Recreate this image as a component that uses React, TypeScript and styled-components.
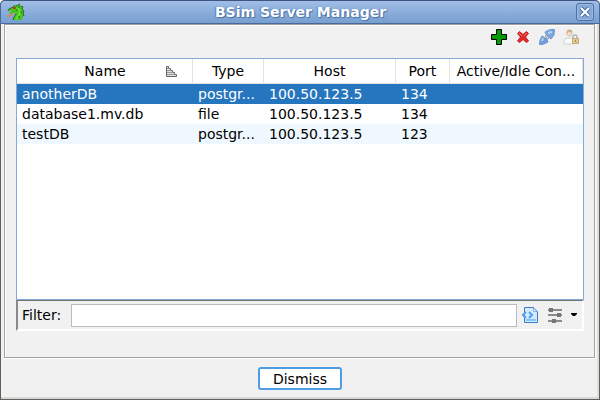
import React from "react";
import styled, { createGlobalStyle, css } from "styled-components";

const GlobalStyle = createGlobalStyle`
  * { box-sizing: border-box; }
  body { margin: 0; }
  body, button, input { font: 14px/20px "DejaVu Sans", sans-serif; color: #000; }
`;

const Window = styled.div`
  min-height: 100vh;
  display: flex;
  flex-direction: column;
  background: #f1f1f1;
  border: 1px solid #5f5f5d;
  border-top: 0;
  border-radius: 5px 5px 0 0;
  box-shadow: inset 0 -2px #d8d8d4, inset -2px 0 #dededb, inset 2px 0 #f3f0ee;
`;

const TitleBar = styled.header`
  height: 24px;
  margin: 0 -1px;
  padding: 0 5px 0 6px;
  display: grid;
  grid-template-columns: 18px 1fr 18px;
  align-items: center;
  background: linear-gradient(#a0bde6, #769fd0);
  border: 1px solid #4a6a9b;
  border-top-color: #3f5680;
  border-radius: 5px 5px 0 0;
`;

const Title = styled.h1`
  margin: 0;
  text-align: center;
  font: bold 14px/20px "DejaVu Sans", sans-serif;
  color: #fff;
  text-shadow: 1px 1px 1px #4a6fa5, -1px 0 1px #5b83ba;
`;

const CloseButton = styled.button`
  width: 18px;
  height: 18px;
  padding: 0;
  display: grid;
  place-items: center;
  background: #86a9d8;
  border: 1px solid #4d70a5;
  border-radius: 3px;
  box-shadow: inset 0 0 0 1px #9bbae3;
`;

const Panel = styled.main`
  flex: 1;
  display: flex;
  flex-direction: column;
  margin: 0 4px 0 3px;
  padding: 0 10px 26px 11px;
  border: 1px solid #a2a2a2;
  box-shadow: inset 1px 1px #fff, 0 1px #fff, 1px 0 #fff;
`;

const Toolbar = styled.div`
  height: 33px;
  padding: 3px 4px 0 0;
  display: flex;
  justify-content: flex-end;
  gap: 6px;
`;

const IconButton = styled.button`
  width: 18px;
  height: 18px;
  padding: 0;
  border: 0;
  background: none;
  svg { display: block; }
`;

const TableArea = styled.div`
  flex: 1;
  background: #fff;
  border: 1px solid #86a9d5;
`;

const ServerTable = styled.table`
  width: 100%;
  table-layout: fixed;
  border-collapse: separate;
  border-spacing: 0;
`;

const Column = styled.col<{ $width?: string }>`
  width: ${(p) => p.$width ?? "auto"};
`;

const HeaderCell = styled.th`
  height: 25px;
  padding: 0 4px;
  font-weight: normal;
  white-space: nowrap;
  border-right: 1px solid #e2e2e2;
  border-bottom: 1px solid #e2e2e2;
`;

const SortedHeader = styled.div`
  display: flex;
  align-items: center;
  span { flex: 1; padding-left: 24px; }
  svg { margin-right: 10px; }
`;

const Row = styled.tr<{ $selected?: boolean }>`
  &:nth-child(odd) { background: #f0f8ff; }
  ${(p) => p.$selected && css`
    &:nth-child(odd) { background: #2675bf; }
    color: #fff;
  `}
`;

const Cell = styled.td`
  height: 20px;
  padding: 0 5px;
  white-space: nowrap;
`;

const FilterBar = styled.div`
  height: 31px;
  padding: 0 4px;
  display: flex;
  align-items: center;
  border: 2px solid #fff;
  border-top: 1px solid #737373;
  border-left: 2px solid #8a8a8a;
`;

const FilterLabel = styled.label`
  width: 49px;
`;

const FilterInput = styled.input`
  flex: 1;
  min-width: 0;
  height: 23px;
  padding: 0 4px;
  margin-right: 4px;
  border: 1px solid #bcbcbc;
  background: #fff;
  outline: 0;
`;

const OptionsButton = styled(IconButton)`
  width: 32px;
  margin-left: 7px;
`;

const Footer = styled.footer`
  height: 41px;
  display: flex;
  justify-content: center;
  align-items: center;
`;

const DismissButton = styled.button`
  width: 84px;
  height: 23px;
  padding: 0;
  line-height: 18px;
  background: #fff;
  border: 2px solid #4e9de6;
  border-radius: 3px;
`;

const Dragon = () => (
  <svg width="18" height="18" viewBox="0 0 18 18" aria-hidden="true">
    <path d="M1 8 2 6 6 4 8 2l2 1 3-2 1 2 2 1-1 2 2 2-1 2 1 3-2 2v2H6l1-3 2-3-2-1-4 1-1-1 3-2z" fill="#46c222" />
    <path d="M1 8 2 6 6 4 8 2m1 1 4-2m1 2 2 1-1 2 2 2-1 2 1 3M6 17l1-3 2-3" fill="none" stroke="#2d6420" />
    <path d="m10 5 3 3-1 4-3 4" fill="none" stroke="#66e43a" strokeWidth="2" />
    <path d="M12 3v2m2 3v2m-2 3v2m-3-8h2" stroke="#276a1a" />
    <path d="M6 4h3v2H6z" fill="#a8442c" />
    <path d="m5 10-2 2H0l2 1v2l4-4z" fill="#f47b20" />
  </svg>
);

const AddIcon = () => (
  <svg width="18" height="18" viewBox="0 0 18 18" aria-hidden="true">
    <path d="M6.5 1.5h5v5h5v5h-5v5h-5v-5h-5v-5h5z" fill="#009c00" stroke="#000" />
  </svg>
);

const DeleteIcon = () => (
  <svg width="18" height="18" viewBox="0 0 18 18" aria-hidden="true">
    <path d="M3.5 5.5l2-2 3.5 3 3.5-3 2 2-3 3.5 3 4-2 1.500-3.500-3-3.500 3-2-1.500 3-4z" fill="#dc2b2b" stroke="#c82020" strokeLinejoin="round" />
    <path d="m5 5 3 3m5-3-3 3" stroke="#ee7a72" />
  </svg>
);

const ConnectIcon = () => (
  <svg width="18" height="18" viewBox="0 0 18 18" aria-hidden="true">
    <path d="M1.5 16.5 2 12l2-4 5 3 1 3-4 2-3 .5z" fill="#6f9cda" stroke="#6f98d0" />
    <path d="M16.5 1.5 16 7l-3 4-4-3-2-4 4-2 3-.5z" fill="#79a7e4" stroke="#6f98d0" />
    <path d="m4 13 1-3m5-5 4-1" stroke="#b4d4f6" strokeWidth="2" />
    <path d="m7 8 1-1 3 3-1 1z" fill="#e4e4e4" stroke="#a8a8a8" />
  </svg>
);

const UserLockIcon = () => (
  <svg width="18" height="18" viewBox="0 0 18 18" aria-hidden="true">
    <path d="M2 16v-3q1-3 4-3h3l2 2v4z" fill="#fafafa" stroke="#cfcfcf" />
    <circle cx="7.5" cy="5.5" r="2.5" fill="#f5dfc6" stroke="#dcc2a2" />
    <path d="M4.5 6Q4 1.500 7.500 1.500q3 0 3 3Q8 4 6.500 4z" fill="#cdb089" />
    <path d="M11 11V9q0-2 2-2t2 2v2" fill="none" stroke="#b4b4b4" strokeWidth="1.500" />
    <path d="M10.5 10.5h6v5h-6z" fill="#e0c78f" stroke="#c8ad74" />
    <path d="M13.5 12v2" stroke="#a68b50" />
  </svg>
);

const SortIcon = () => (
  <svg width="13" height="13" viewBox="0 0 13 13" aria-hidden="true">
    <path d="M1.5 1.5h2v2h2v2h2v2h2v2h2v2h-10z" fill="#ddd" stroke="#666" />
    <path d="M2 3.500h2m-2 2h4m-4 2h6m-6 2h8" stroke="#999" />
  </svg>
);

const FilterDocIcon = () => (
  <svg width="18" height="18" viewBox="0 0 18 18" aria-hidden="true">
    <path d="M3.5 1.5h9l4 4v11h-13z" fill="#d5e9fc" stroke="#3f78c4" />
    <path d="M12.5 2v3.5H16z" fill="#fff" stroke="#7db4ea" />
    <path d="M5 14h10" stroke="#7cc8fa" strokeWidth="2" />
    <path d="M5 6 2 9l3 3m3-6 3 3-3 3" fill="none" stroke="#4fa3ee" strokeWidth="2" />
  </svg>
);

const OptionsIcon = () => (
  <svg width="32" height="18" viewBox="0 0 32 18" aria-hidden="true">
    <path d="M2 4h14M2 9h14M2 15h14" stroke="#8b8b8b" strokeWidth="2" />
    <path d="M5 2v4M13 7v4M8 13v4" stroke="#777" strokeWidth="4" />
    <path d="M25 7h6v1l-2 2h-2l-2-2z" fill="#000" />
  </svg>
);

const servers = [
  { name: "anotherDB", type: "postgr...", host: "100.50.123.5", port: "134" },
  { name: "database1.mv.db", type: "file", host: "100.50.123.5", port: "134" },
  { name: "testDB", type: "postgr...", host: "100.50.123.5", port: "123" },
];

export default function App() {
  return (
    <>
      <GlobalStyle />
      <Window>
        <TitleBar>
          <Dragon />
          <Title>BSim Server Manager</Title>
          <CloseButton aria-label="Close">
            <svg width="12" height="12" viewBox="0 0 12 12" aria-hidden="true">
              <path d="m2 2 8 8m0-8-8 8" stroke="#4a6fa5" strokeWidth="4" />
              <path d="m2 2 8 8m0-8-8 8" stroke="#fff" strokeWidth="2" />
            </svg>
          </CloseButton>
        </TitleBar>
        <Panel>
          <Toolbar>
            <IconButton aria-label="Add server"><AddIcon /></IconButton>
            <IconButton aria-label="Delete server"><DeleteIcon /></IconButton>
            <IconButton aria-label="Connect"><ConnectIcon /></IconButton>
            <IconButton aria-label="Change password"><UserLockIcon /></IconButton>
          </Toolbar>
          <TableArea>
            <ServerTable>
              <colgroup>
                <Column $width="176px" />
                <Column $width="71px" />
                <Column $width="132px" />
                <Column $width="54px" />
                <Column />
              </colgroup>
              <thead>
                <tr>
                  <HeaderCell><SortedHeader><span>Name</span><SortIcon /></SortedHeader></HeaderCell>
                  <HeaderCell>Type</HeaderCell>
                  <HeaderCell>Host</HeaderCell>
                  <HeaderCell>Port</HeaderCell>
                  <HeaderCell>Active/Idle Con...</HeaderCell>
                </tr>
              </thead>
              <tbody>
                {servers.map((s, i) => (
                  <Row key={s.name} $selected={i === 0}>
                    <Cell>{s.name}</Cell>
                    <Cell>{s.type}</Cell>
                    <Cell>{s.host}</Cell>
                    <Cell>{s.port}</Cell>
                    <Cell />
                  </Row>
                ))}
              </tbody>
            </ServerTable>
          </TableArea>
          <FilterBar>
            <FilterLabel htmlFor="filter">Filter:</FilterLabel>
            <FilterInput id="filter" type="text" />
            <IconButton aria-label="Filter options"><FilterDocIcon /></IconButton>
            <OptionsButton aria-label="Column filters"><OptionsIcon /></OptionsButton>
          </FilterBar>
        </Panel>
        <Footer>
          <DismissButton>Dismiss</DismissButton>
        </Footer>
      </Window>
    </>
  );
}
